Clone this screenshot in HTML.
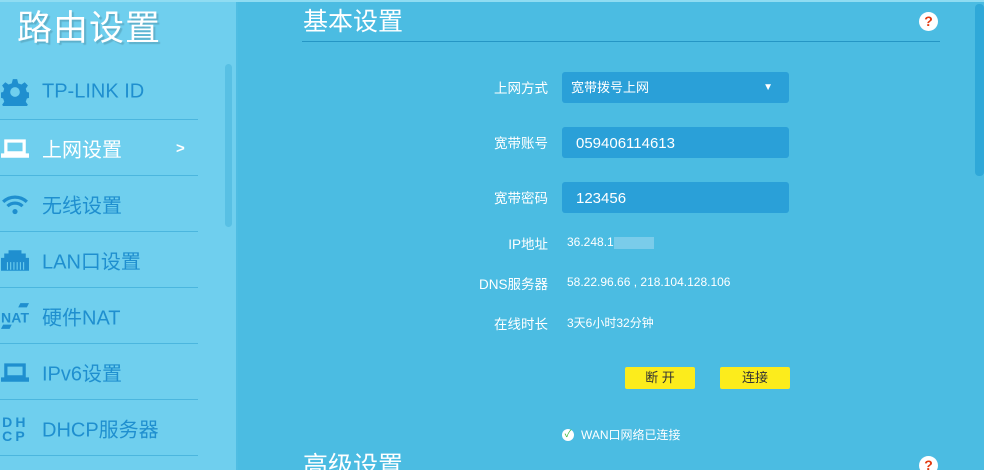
<!DOCTYPE html>
<html><head><meta charset="utf-8"><style>
*{margin:0;padding:0;box-sizing:border-box}
html,body{width:984px;height:470px;overflow:hidden}
body{background:#4bbce2;font-family:"Liberation Sans","Noto Sans CJK SC",sans-serif;position:relative}
.side{position:absolute;left:0;top:0;width:238px;height:470px;background:#6fcfee;border-right:2px solid #4fbde3}
.topline{position:absolute;left:0;top:0;width:984px;height:2px;background:#8fdcf2}
.logo{position:absolute;left:17px;top:0px;font-size:35px;color:#fff;text-shadow:2px 2px 1px rgba(0,0,0,.15);letter-spacing:1px}
.sscroll{position:absolute;left:225px;top:64px;width:7px;height:163px;border-radius:4px;background:#58c0e4}
.item{position:absolute;left:0;width:198px;height:56px;border-bottom:1px solid #4bb6de}
.item .t{position:absolute;left:42px;top:50%;transform:translateY(-50%);font-size:20px;color:#1f8fcf}
.item .ic{position:absolute;left:1px;top:50%;transform:translateY(-50%);width:28px;height:28px;color:#1f8fcf}
.item.act .t{color:#fff}
.h{position:absolute;left:303px;font-size:25px;color:#fff}
.hr{position:absolute;left:302px;top:41px;width:638px;height:1px;background:#2596c5}
.help{position:absolute;width:19px;height:19px;border-radius:50%;background:#fff;color:#e23a10;font-size:14px;font-weight:bold;text-align:center;line-height:19px}
.lbl{position:absolute;right:436px;font-size:13.5px;color:#fff;text-align:right}
.inp{position:absolute;left:562px;width:227px;height:31px;background:#2aa0d8;border-radius:3px;color:#fff;font-size:15px;line-height:31px;padding-left:14px}
.val{position:absolute;left:567px;font-size:12px;color:#fff}
.btn{position:absolute;top:367px;width:70px;height:22px;background:#fcec1c;border-radius:2px;font-size:13px;color:#333;text-align:center;line-height:22px}
.rs{position:absolute;left:975px;top:4px;width:9px;height:172px;background:#2fa8d8;border-radius:4px}
</style></head><body>
<div class="side">
<div class="logo">路由设置</div>
<div class="sscroll"></div>
<div class="item" style="top:64px"><svg class="ic" viewBox="0 0 26 26"><path fill="#1f8fcf" d="M11 1h4l1 4 3 1 3-2 3 3-2 3 1 3 4 1v4l-4 1-1 3 2 3-3 3-3-2-3 1-1 4h-4l-1-4-3-1-3 2-3-3 2-3-1-3-4-1v-4l4-1 1-3-2-3 3-3 3 2 3-1z"/><circle cx="13" cy="13" r="4.5" fill="#6fcfee"/></svg><span class="t">TP-LINK ID</span></div>
<div class="item act" style="top:120px"><svg class="ic" viewBox="0 0 26 26"><path fill="#fff" d="M3 5h20v13H3zM6 8v8h14V8zM0 18h26v4H0z"/></svg><span class="t">上网设置</span><span style="position:absolute;left:176px;top:20px;color:#fff;font-size:15px;font-weight:bold">&gt;</span></div>
<div class="item" style="top:176px"><svg class="ic" viewBox="0 0 26 26"><path fill="none" stroke="#1f8fcf" stroke-width="3" d="M2 11a16 16 0 0 1 22 0M6 15a10 10 0 0 1 14 0"/><circle cx="13" cy="20" r="2.4" fill="#1f8fcf"/></svg><span class="t">无线设置</span></div>
<div class="item" style="top:232px"><svg class="ic" viewBox="0 0 26 26"><path fill="#1f8fcf" d="M7 4h12v3h4v4h3v12H0V11h3V7h4z"/><path stroke="#6fcfee" stroke-width="1" d="M6 15v7M9 15v7M12 15v7M15 15v7M18 15v7M21 15v7"/></svg><span class="t">LAN口设置</span></div>
<div class="item" style="top:288px"><svg class="ic" viewBox="0 0 26 26"><text x="0" y="19" font-size="13" font-weight="bold" fill="#1f8fcf" font-family="Liberation Sans" textLength="26">NAT</text><path fill="#1f8fcf" d="M18 1h8l-2 4h-8zM2 21h8l-2 4H0z"/></svg><span class="t">硬件NAT</span></div>
<div class="item" style="top:344px"><svg class="ic" viewBox="0 0 26 26"><path fill="#1f8fcf" d="M3 5h20v13H3zM6 8v8h14V8zM0 18h26v4H0z"/></svg><span class="t">IPv6设置</span></div>
<div class="item" style="top:400px"><svg class="ic" viewBox="0 0 26 26"><text x="1" y="12" font-size="13" font-weight="bold" fill="#1f8fcf" font-family="Liberation Sans" letter-spacing="3">DH</text><text x="1" y="25" font-size="13" font-weight="bold" fill="#1f8fcf" font-family="Liberation Sans" letter-spacing="3">CP</text></svg><span class="t">DHCP服务器</span></div>
</div>
<div class="topline"></div>
<div class="rs"></div>
<div class="h" style="top:2px">基本设置</div>
<div class="help" style="left:919px;top:12px">?</div>
<div class="hr"></div>
<div class="lbl" style="top:77px">上网方式</div>
<div class="inp" style="top:72px;font-size:13px;padding-left:9px">宽带拨号上网<span style="position:absolute;right:16px;top:0;font-size:10px">▼</span></div>
<div class="lbl" style="top:132px">宽带账号</div>
<div class="inp" style="top:127px;line-height:33px">059406114613</div>
<div class="lbl" style="top:187px">宽带密码</div>
<div class="inp" style="top:182px;line-height:33px">123456</div>
<div class="lbl" style="top:233px">IP地址</div>
<div class="val" style="top:235px">36.248.1<span style="display:inline-block;width:40px;height:12px;background:#8ed3ee;vertical-align:middle;opacity:.7"></span></div>
<div class="lbl" style="top:273px">DNS服务器</div>
<div class="val" style="top:275px">58.22.96.66 , 218.104.128.106</div>
<div class="lbl" style="top:313px">在线时长</div>
<div class="val" style="top:314px">3天6小时32分钟</div>
<div class="btn" style="left:625px">断 开</div>
<div class="btn" style="left:720px">连接</div>
<div style="position:absolute;left:562px;top:429px;width:12px;height:12px;border-radius:50%;background:#fff;color:#3cba3c;font-size:10px;line-height:12px;text-align:center">✓</div>
<div style="position:absolute;left:581px;top:426px;font-size:12px;color:#fff">WAN口网络已连接</div>
<div class="h" style="top:446px">高级设置</div>
<div class="help" style="left:919px;top:456px">?</div>
</body></html>
